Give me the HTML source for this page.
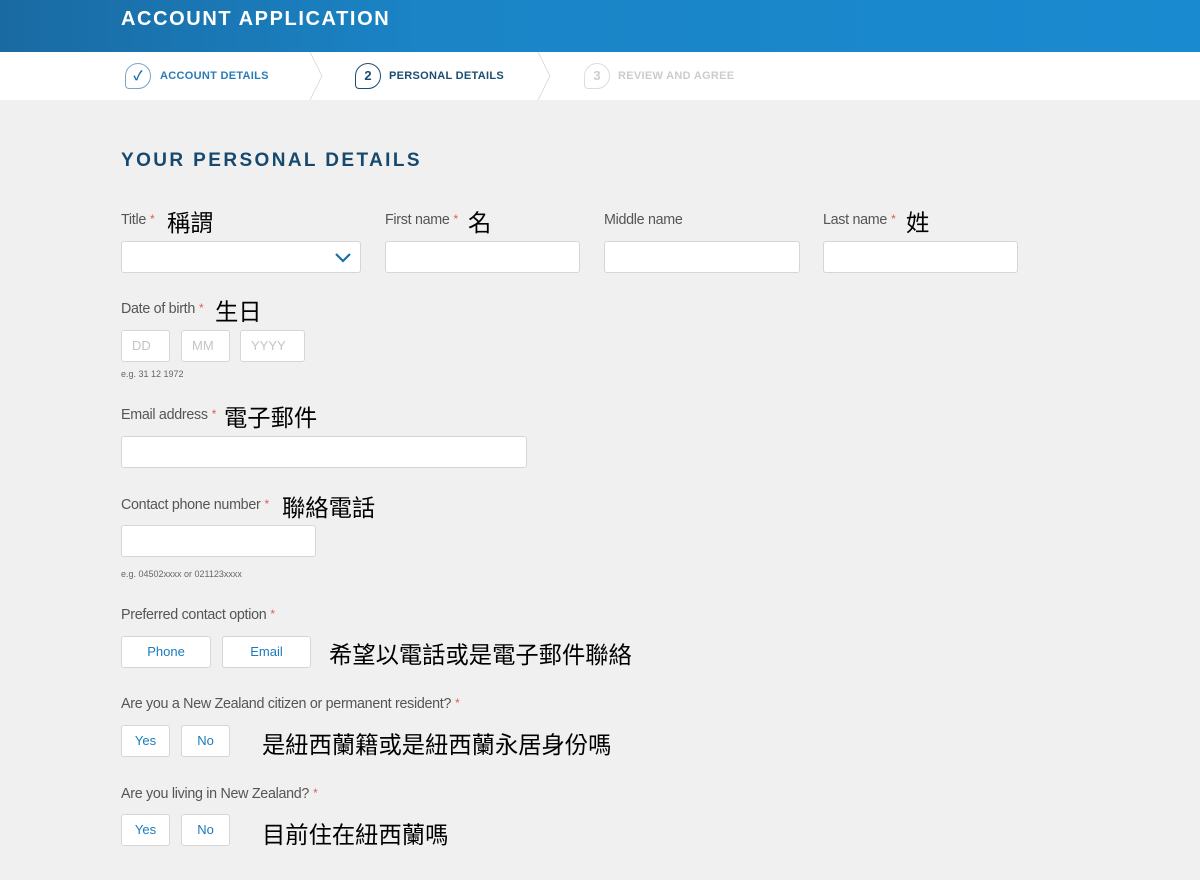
<!DOCTYPE html>
<html><head><meta charset="utf-8"><style>
*{margin:0;padding:0;box-sizing:border-box}
body{width:1200px;height:880px;background:#f0f0f0;position:relative;overflow:hidden;font-family:"Liberation Sans","Noto Sans CJK TC",sans-serif}
.a{position:absolute;white-space:nowrap}
.hdr{left:0;top:0;width:1200px;height:52px;background:linear-gradient(90deg,#1a6aa2 0%,#1a84c6 35%,#1a8ad0 100%)}
.steps{left:0;top:52px;width:1200px;height:48px;background:#fff}
.lbl{font-size:14.3px;color:#555;letter-spacing:-0.3px}
.lbl i{color:#e05a5a;font-style:normal;font-size:12px;margin-left:4px;vertical-align:1px}
.zh{font-size:23.3px;color:#000;font-family:"Noto Sans CJK TC",sans-serif}
.in{background:#fff;border:1px solid #d6d6d6;border-radius:3px;height:32px}
.ph{font-size:13px;color:#c4c4c4;padding:7px 0 0 10px}
.btn{background:#fff;border:1px solid #d6d6d6;border-radius:3px;height:32px;font-size:13px;color:#1a7abf;text-align:center;line-height:30px}
.hint{font-size:9px;color:#666}
.st{font-size:11px;font-weight:bold;letter-spacing:0.3px}
.circ{width:26px;height:26px;border:1.5px solid;text-align:center;line-height:23px;font-size:13px;font-weight:bold}
</style></head><body>
<div class="a hdr"></div>
<div class="a" style="left:121px;top:8px;font-size:20px;font-weight:bold;color:#fff;letter-spacing:1.6px">ACCOUNT APPLICATION</div>
<div class="a steps"></div>
<svg class="a" style="left:0;top:52px" width="1200" height="48"><path d="M310 0 L322 24 L310 48" stroke="#ddd" fill="none"/><path d="M538 0 L550 24 L538 48" stroke="#ddd" fill="none"/></svg>
<div class="a circ" style="left:125px;top:63px;border-color:#7aa6c8;color:#1a6fa8;border-radius:50% 50% 50% 4px">✓</div>
<div class="a st" style="left:160px;top:70px;color:#2a7ab8">ACCOUNT DETAILS</div>
<div class="a circ" style="left:355px;top:63px;border-color:#1a4d72;color:#1a4d72;border-radius:50% 50% 50% 4px">2</div>
<div class="a st" style="left:389px;top:70px;color:#1a4d72">PERSONAL DETAILS</div>
<div class="a circ" style="left:584px;top:63px;border-color:#ddd;color:#ccc;border-radius:50% 50% 50% 4px">3</div>
<div class="a st" style="left:618px;top:70px;color:#ccc">REVIEW AND AGREE</div>
<div class="a" style="left:121px;top:150px;font-size:19px;font-weight:bold;color:#17496e;letter-spacing:2.4px">YOUR PERSONAL DETAILS</div>

<div class="a lbl" style="left:121px;top:212px">Title<i>*</i></div><div class="a zh" style="left:167px;top:204px">稱謂</div>
<div class="a lbl" style="left:385px;top:212px">First name<i>*</i></div><div class="a zh" style="left:468px;top:204px">名</div>
<div class="a lbl" style="left:604px;top:212px">Middle name</div>
<div class="a lbl" style="left:823px;top:212px">Last name<i>*</i></div><div class="a zh" style="left:906px;top:204px">姓</div>
<div class="a in" style="left:121px;top:241px;width:240px"></div>
<svg class="a" style="left:334px;top:251px" width="18" height="12"><path d="M2 3 L9 10 L16 3" stroke="#1a6fa8" stroke-width="2.2" fill="none"/></svg>
<div class="a in" style="left:385px;top:241px;width:195px"></div>
<div class="a in" style="left:604px;top:241px;width:196px"></div>
<div class="a in" style="left:823px;top:241px;width:195px"></div>

<div class="a lbl" style="left:121px;top:301px">Date of birth<i>*</i></div><div class="a zh" style="left:215px;top:293px">生日</div>
<div class="a in ph" style="left:121px;top:330px;width:49px">DD</div>
<div class="a in ph" style="left:181px;top:330px;width:49px">MM</div>
<div class="a in ph" style="left:240px;top:330px;width:65px">YYYY</div>
<div class="a hint" style="left:121px;top:369px">e.g. 31 12 1972</div>

<div class="a lbl" style="left:121px;top:407px">Email address<i>*</i></div><div class="a zh" style="left:224px;top:399px">電子郵件</div>
<div class="a in" style="left:121px;top:436px;width:406px"></div>

<div class="a lbl" style="left:121px;top:497px">Contact phone number<i>*</i></div><div class="a zh" style="left:282px;top:489px">聯絡電話</div>
<div class="a in" style="left:121px;top:525px;width:195px"></div>
<div class="a hint" style="left:121px;top:569px">e.g. 04502xxxx or 021123xxxx</div>

<div class="a lbl" style="left:121px;top:607px">Preferred contact option<i>*</i></div>
<div class="a btn" style="left:121px;top:636px;width:90px">Phone</div>
<div class="a btn" style="left:222px;top:636px;width:89px">Email</div>
<div class="a zh" style="left:329px;top:636px">希望以電話或是電子郵件聯絡</div>

<div class="a lbl" style="left:121px;top:696px">Are you a New Zealand citizen or permanent resident?<i>*</i></div>
<div class="a btn" style="left:121px;top:725px;width:49px">Yes</div>
<div class="a btn" style="left:181px;top:725px;width:49px">No</div>
<div class="a zh" style="left:262px;top:726px">是紐西蘭籍或是紐西蘭永居身份嗎</div>

<div class="a lbl" style="left:121px;top:786px">Are you living in New Zealand?<i>*</i></div>
<div class="a btn" style="left:121px;top:814px;width:49px">Yes</div>
<div class="a btn" style="left:181px;top:814px;width:49px">No</div>
<div class="a zh" style="left:262px;top:816px">目前住在紐西蘭嗎</div>
</body></html>
